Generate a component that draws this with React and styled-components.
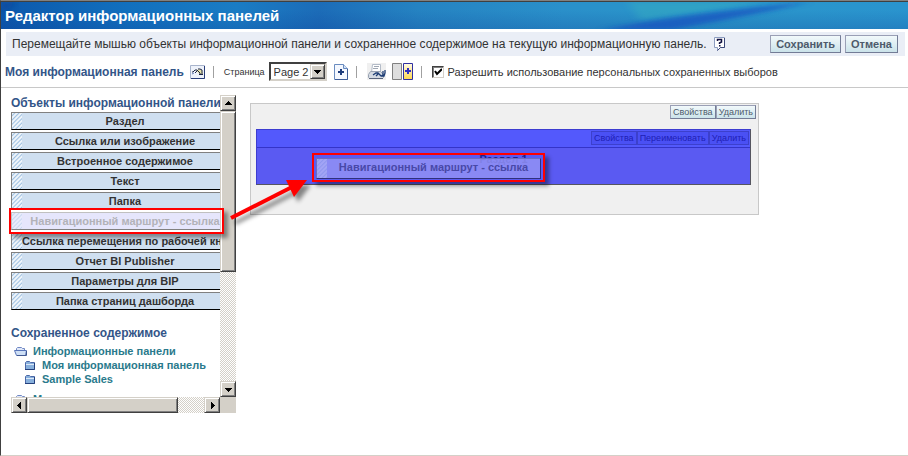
import { useState } from "react";
import styled, { createGlobalStyle, css } from "styled-components";

const GlobalStyle = createGlobalStyle`
  * {
    box-sizing: border-box;
  }

  body {
    margin: 0;
    background: #ffffff;
    color: #333333;
    font-family: "Liberation Sans", Arial, sans-serif;
    font-size: 12px;
  }

  button, select {
    font-family: inherit;
  }
`;

const Page = styled.div`
  display: flex;
  flex-direction: column;
  min-height: 100vh;
  border-top: 1px solid #808080;
  border-left: 1px solid #404040;
  border-bottom: 1px solid #d4d0c8;
`;

const Header = styled.header`
  position: relative;
  display: flex;
  align-items: center;
  height: 28px;
  padding-left: 4px;
  border-top: 1px solid #404040;
  background: linear-gradient(rgba(10, 50, 140, 0) 30%, rgba(10, 50, 140, 0.2)),
    linear-gradient(
      90deg,
      #0c58ac 0%,
      #1270be 14%,
      #1a7cc4 26%,
      #1c6cb8 35%,
      #2583c2 46%,
      #2a90ca 62%,
      #2a96ca 76%,
      #2a94ce 100%
    );
`;

const Swoosh = styled.svg`
  position: absolute;
  inset: 0;
  width: 100%;
  height: 100%;
`;

const Title = styled.h1`
  position: relative;
  margin: 0;
  color: #ffffff;
  font-size: 15px;
  line-height: 18px;
`;

const Hint = styled.div`
  display: flex;
  align-items: center;
  min-height: 24px;
  margin: 3px 3px 0 5px;
  padding: 0 7px 0 6px;
  background: #eaeef6;
`;

const HintText = styled.span`
  font-size: 12px;
  line-height: 16px;
`;

const HelpButton = styled.button`
  display: flex;
  margin-left: 8px;
  padding: 0;
  border: 0;
  background: none;
`;

const HintActions = styled.div`
  display: flex;
  gap: 4px;
  margin-left: auto;
`;

const bevel = css`
  border: 1px solid;
  border-color: #9a9fb5 #737c96 #737c96 #9a9fb5;
  background: linear-gradient(#f2f9fb, #cbe3ea);
  color: #4d5a6b;
`;

const ActionButton = styled.button`
  ${bevel}
  height: 18px;
  padding: 0 5px;
  font-size: 11px;
  font-weight: bold;
  line-height: 16px;
`;

const SmallButton = styled.button`
  ${bevel}
  height: 14px;
  padding: 0 2px;
  font-size: 9px;
  line-height: 12px;
`;

const Toolbar = styled.div`
  display: flex;
  align-items: center;
  height: 32px;
  padding-left: 4px;
  border-bottom: 1px solid #c8c8c8;
`;

const DashboardName = styled.h2`
  margin: 0 6px 0 0;
  color: #335588;
  font-size: 12px;
`;

const IconButton = styled.button`
  display: flex;
  margin: 0;
  padding: 0;
  border: 0;
  background: none;
`;

const PageTools = styled.div`
  display: flex;
  align-items: center;
  gap: 6px;
`;

const Divider = styled.span`
  width: 1px;
  height: 12px;
  margin: 0 10px 0 8px;
  background: #a0a0a0;
`;

const PageLabel = styled.label`
  margin-right: 4px;
  font-size: 9px;
`;

const SelectBox = styled.div`
  position: relative;
  margin-right: 7px;
`;

const PageSelect = styled.select`
  display: block;
  width: 58px;
  height: 19px;
  padding: 0 0 0 3px;
  border: 2px solid;
  border-color: #404040 #d4d0c8 #d4d0c8 #404040;
  border-radius: 0;
  background: #ffffff;
  color: #333333;
  font-size: 11px;
  appearance: none;
`;

const raised = css`
  border: 1px solid;
  border-color: #d4d0c8 #404040 #404040 #d4d0c8;
  background: #d4d0c8;
  box-shadow: inset 1px 1px #ffffff, inset -1px -1px #808080;
`;

const SelectArrow = styled.span`
  ${raised}
  position: absolute;
  top: 2px;
  right: 2px;
  display: flex;
  align-items: center;
  justify-content: center;
  width: 15px;
  height: 15px;
  pointer-events: none;
`;

const CheckLabel = styled.label`
  display: flex;
  align-items: center;
  gap: 4px;
  font-size: 11px;
`;

const CheckWrap = styled.span`
  position: relative;
  display: flex;

  svg {
    position: absolute;
    top: 2px;
    left: 2px;
    pointer-events: none;
  }
`;

const Check = styled.input`
  width: 12px;
  height: 12px;
  margin: 0;
  border: 1px solid;
  border-color: #404040 #d4d0c8 #d4d0c8 #404040;
  box-shadow: inset 1px 1px #808080;
  background: #ffffff;
  appearance: none;
`;

const Workspace = styled.main`
  position: relative;
  display: flex;
  align-items: flex-start;
  gap: 14px;
  padding: 7px 149px 0 10px;
`;

const Sidebar = styled.aside`
  display: grid;
  flex: none;
  grid-template-columns: 209px 16px;
  grid-template-rows: 302px 16px;
`;

const SidebarView = styled.div`
  overflow: hidden;
`;

const SideTitle = styled.h2`
  margin: 0;
  color: #335588;
  font-size: 12px;
  line-height: 17px;
  white-space: nowrap;
`;

const ObjectList = styled.ul`
  display: flex;
  flex-direction: column;
  gap: 2px;
  width: 218px;
  margin: 0 0 15px;
  padding: 0;
  list-style: none;
`;

const Tile = styled.li`
  display: flex;
  height: 18px;
  border: 1px solid;
  border-color: #808080 #000000 #000000 #808080;
  background: #cfdff0;
  font-size: 11px;
  font-weight: bold;
  line-height: 16px;
  white-space: nowrap;

  ${({ $faded }) =>
    $faded &&
    css`
      border-color: #c0c0c0 #808080 #808080 #c0c0c0;
      background: #e6e6fc;
      color: #b2b2b8;
    `}
`;

const Grip = styled.span`
  flex: none;
  width: 10px;
  background: repeating-linear-gradient(
    135deg,
    #eef4fa 0px,
    #eef4fa 1px,
    #9dc0e2 2px,
    #eef4fa 3px
  );
  opacity: ${({ $faded }) => ($faded ? 0.4 : 1)};
`;

const TileText = styled.span`
  flex: 1;
  text-align: center;
`;

const Tree = styled.ul`
  margin: 0;
  padding: 2px 0 0 3px;
  list-style: none;
`;

const Branch = styled.li`
  display: flex;
  align-items: center;
  gap: ${({ $nested }) => ($nested ? 6 : 5)}px;
  height: 14px;
  margin-top: ${({ $spaced }) => ($spaced ? 6 : 0)}px;
  padding-left: ${({ $nested }) => ($nested ? 10 : 0)}px;
  white-space: nowrap;
`;

const BranchLink = styled.a`
  color: #2a7a8c;
  font-size: 11px;
  font-weight: bold;
  text-decoration: none;
`;

const Track = styled.div`
  display: flex;
  flex-direction: ${({ $horizontal }) => ($horizontal ? "row" : "column")};
  background: repeating-conic-gradient(#ffffff 0 25%, #d4d0c8 0 50%) 0 0 / 2px 2px;
`;

const TrackButton = styled.button`
  ${raised}
  display: flex;
  flex: none;
  align-items: center;
  justify-content: center;
  width: 16px;
  height: 16px;
  padding: 0;

  &:last-child {
    margin-top: ${({ $horizontal }) => ($horizontal ? "0" : "auto")};
    margin-left: ${({ $horizontal }) => ($horizontal ? "auto" : "0")};
  }
`;

const Thumb = styled.div`
  ${raised}
  flex: none;
  width: ${({ $horizontal }) => ($horizontal ? "151px" : "16px")};
  height: ${({ $horizontal }) => ($horizontal ? "16px" : "161px")};
`;

const Corner = styled.div`
  background: #d4d0c8;
`;

const Column = styled.section`
  display: flex;
  flex: 1;
  flex-direction: column;
  min-height: 111px;
  margin-top: 8px;
  padding: 1px 2px 29px;
  border: 1px solid #c8c8c8;
  background: #f0f0f0;
`;

const ColumnBar = styled.div`
  display: flex;
  justify-content: flex-end;
`;

const Section = styled.section`
  height: 56px;
  margin: 10px 5px 0 3px;
  border: 1px solid;
  border-color: #3c3cd0 #55555f #55555f #3c3cd0;
  background: #5a5af2;
`;

const SectionBar = styled(ColumnBar)`
  height: 18px;
  padding: 1px 1px 0;
  border-bottom: 1px solid #3434c8;
  background: #5359fc;

  ${SmallButton} {
    border-color: #3c40cc;
    background: #4a50f4;
    color: #2020b4;
  }
`;

const SectionName = styled.h3`
  margin: 4px 0 0;
  color: #20208c;
  font-size: 11px;
  line-height: 14px;
  text-align: center;
`;

const DragGhost = styled.div`
  position: absolute;
  top: 70px;
  left: 315px;
  display: flex;
  width: 225px;
  height: 21px;
  border: 1px solid;
  border-color: #6c6cc0 #30307c #30307c #6c6cc0;
  background: rgba(146, 146, 244, 0.85);
  color: #4848a8;
  font-size: 11px;
  font-weight: bold;
  line-height: 17px;
  white-space: nowrap;

  ${Grip} {
    opacity: 0.25;
  }
`;

const Highlight = styled.div`
  position: absolute;
  border: 2px solid #ff0000;
  box-shadow: 4px 4px 4px rgba(0, 0, 0, 0.4);
  pointer-events: none;
`;

const SourceMark = styled(Highlight)`
  top: 120px;
  left: 8px;
  width: 215px;
  height: 26px;
`;

const TargetMark = styled(Highlight)`
  top: 65px;
  left: 311px;
  width: 233px;
  height: 29px;
`;

const Arrow = styled.svg`
  position: absolute;
  top: 82px;
  left: 219px;
  filter: drop-shadow(4px 5px 2px rgba(0, 0, 0, 0.45));
  pointer-events: none;
`;

const OBJECTS = [
  "Раздел",
  "Ссылка или изображение",
  "Встроенное содержимое",
  "Текст",
  "Папка",
  "Навигационный маршрут - ссылка",
  "Ссылка перемещения по рабочей книге",
  "Отчет BI Publisher",
  "Параметры для BIP",
  "Папка страниц дашборда",
];

const DRAGGED = "Навигационный маршрут - ссылка";

function Triangle({ dir }) {
  const points = {
    up: "0,5 7,5 4,1 3,1",
    down: "0,2 7,2 4,6 3,6",
    left: "5,0 5,7 1,4 1,3",
    right: "2,0 2,7 6,4 6,3",
  };
  return (
    <svg width="7" height="7" shapeRendering="crispEdges">
      <polygon points={points[dir]} fill="#000" />
    </svg>
  );
}

function HelpIcon() {
  return (
    <svg width="12" height="14" viewBox="0 0 12 14">
      <path d="M.5 .5h10v10h-4l-3 3v-3h-3z" fill="#fff" stroke="#8c9cc0" />
      <path d="M10.500 1v9.500h-4l-3 3" fill="none" stroke="#3c4878" />
      <path d="M3.500 4V2.500h4v2.500l-2 1V7" fill="none" stroke="#101040" strokeWidth="1.500" />
      <path d="M5 8h1.500v1.500H5z" fill="#101040" />
    </svg>
  );
}

function PropertiesIcon() {
  return (
    <svg width="15" height="14" viewBox="0 0 15 14">
      <path d="M.5 .5h14v13H.5z" fill="#eef2fa" stroke="#a8b4cc" />
      <path d="M14.500 1v12.500H1" fill="none" stroke="#283c78" />
      <path d="M6 5.500l3-1.500 3 1 1 4-3 .5z" fill="#e8e4a8" />
      <path d="M2 7h1l2-2h2l3 3v1M5 8l2-2M8 4h2l2 1v4M9 9.500h4" fill="none" stroke="#1c2444" />
      <path d="M2 9l2-1" stroke="#6880b8" />
    </svg>
  );
}

function AddPageIcon() {
  return (
    <svg width="14" height="16" viewBox="0 0 14 16">
      <path d="M.5 .5h9l4 4v11H.5z" fill="#f4f8ff" stroke="#6a8cc0" />
      <path d="M9.500 .5v4h4" fill="#d4e2f6" stroke="#6a8cc0" />
      <path d="M13.500 5v10.500H1" fill="none" stroke="#3c5c98" />
      <path d="M4 8h6M7 5v6" stroke="#1c3c7c" strokeWidth="2" />
    </svg>
  );
}

function PrintIcon() {
  return (
    <svg width="19" height="17" viewBox="0 0 19 17">
      <path d="M0 0h19v17H0z" fill="#f0f0f0" />
      <path d="M5.500 1.500h8v8h-9z" fill="#fff" stroke="#b4bcc8" />
      <path d="M7 3.500h5M6 5.500h5" stroke="#a0a8b4" />
      <path d="M1.500 11.500l2-3h10l3 3v3l-1 1h-13l-1-1z" fill="#d4dae2" stroke="#98a2b2" />
      <path d="M2 15.500h14" stroke="#58647c" />
      <path d="M6 12l3-2h2l3 3 2-1V8M9 13l2-2M14 13h3l1-3V7" fill="none" stroke="#1c3c74" strokeWidth="1.300" />
    </svg>
  );
}

function AddColumnIcon() {
  return (
    <svg width="21" height="17" viewBox="0 0 21 17">
      <defs>
        <linearGradient id="gold" x1="0" y1="0" x2="0" y2="1">
          <stop offset="0" stopColor="#fffbe8" />
          <stop offset="1" stopColor="#ffd84c" />
        </linearGradient>
      </defs>
      <path d="M.5 .5h9v16h-9z" fill="#dedede" stroke="#808080" />
      <path d="M11.500 .5h9v16h-9z" fill="url(#gold)" stroke="#3030a0" />
      <path d="M13 8h6M16 5v6" stroke="#3030c0" strokeWidth="2" />
    </svg>
  );
}

function Folder({ open }) {
  if (open)
    return (
      <svg width="14" height="9" viewBox="0 0 14 9">
        <path d="M2.500 4V1.500l1-1h4l1 1h2v3" fill="#e0e8f8" stroke="#7088c4" />
        <path d="M.5 3.500h12l-1 5h-9z" fill="#cfe0f6" stroke="#5874b8" />
        <path d="M12.500 4v4.500H3" fill="none" stroke="#405890" />
      </svg>
    );
  return (
    <svg width="12" height="9" viewBox="0 0 12 9">
      <path d="M1.500 8.500v-7l1-1h3l1 1h4v7z" fill="#88b0dc" stroke="#4c68a8" />
      <path d="M2 3.500h8" stroke="#dce8f8" />
      <path d="M10.500 2v6.500H1" fill="none" stroke="#24407c" />
    </svg>
  );
}

function ScrollBar({ horizontal }) {
  return (
    <Track $horizontal={horizontal}>
      <TrackButton $horizontal={horizontal}>
        <Triangle dir={horizontal ? "left" : "up"} />
      </TrackButton>
      <Thumb $horizontal={horizontal} />
      <TrackButton $horizontal={horizontal}>
        <Triangle dir={horizontal ? "right" : "down"} />
      </TrackButton>
    </Track>
  );
}

function SavedItem({ open, nested, spaced, children }) {
  return (
    <Branch $nested={nested} $spaced={spaced}>
      <Folder open={open} />
      <BranchLink href="#">{children}</BranchLink>
    </Branch>
  );
}

function App() {
  const [page, setPage] = useState("Page 2");
  const [allowSaved, setAllowSaved] = useState(true);

  return (
    <>
      <GlobalStyle />
      <Page>
        <Header>
          <Swoosh viewBox="0 0 908 27" preserveAspectRatio="none">
            <defs>
              <filter id="soft" x="-10%" y="-50%" width="120%" height="200%">
                <feGaussianBlur stdDeviation="5 2" />
              </filter>
            </defs>
            <path d="M628 0h140L640 18z" fill="#38b0c0" opacity="0.45" filter="url(#soft)" />
            <path d="M600 28Q680 12 810 0Q730 18 670 28z" fill="#1450c0" opacity="0.7" filter="url(#soft)" />
            <path d="M0 0h16L0 14z" fill="#083c90" opacity="0.5" filter="url(#soft)" />
          </Swoosh>
          <Title>Редактор информационных панелей</Title>
        </Header>

        <Hint>
          <HintText>
            Перемещайте мышью объекты информационной панели и сохраненное
            содержимое на текущую информационную панель.
          </HintText>
          <HelpButton aria-label="Справка">
            <HelpIcon />
          </HelpButton>
          <HintActions>
            <ActionButton>Сохранить</ActionButton>
            <ActionButton>Отмена</ActionButton>
          </HintActions>
        </Hint>

        <Toolbar>
          <DashboardName>Моя информационная панель</DashboardName>
          <IconButton>
            <PropertiesIcon />
          </IconButton>
          <Divider />
          <PageLabel htmlFor="page">Страница</PageLabel>
          <SelectBox>
            <PageSelect
              id="page"
              value={page}
              onChange={(e) => setPage(e.target.value)}
            >
              <option>Page 1</option>
              <option>Page 2</option>
            </PageSelect>
            <SelectArrow>
              <Triangle dir="down" />
            </SelectArrow>
          </SelectBox>
          <IconButton>
            <AddPageIcon />
          </IconButton>
          <Divider />
          <PageTools>
            <IconButton>
              <PrintIcon />
            </IconButton>
            <IconButton>
              <AddColumnIcon />
            </IconButton>
          </PageTools>
          <Divider />
          <CheckLabel>
            <CheckWrap>
              <Check
                type="checkbox"
                checked={allowSaved}
                onChange={(e) => setAllowSaved(e.target.checked)}
              />
              {allowSaved && (
                <svg width="8" height="8">
                  <path d="M1 3l2 3 5-5" fill="none" stroke="#000" strokeWidth="2" />
                </svg>
              )}
            </CheckWrap>
            Разрешить использование персональных сохраненных выборов
          </CheckLabel>
        </Toolbar>

        <Workspace>
          <Sidebar>
            <SidebarView>
              <SideTitle>Объекты информационной панели</SideTitle>
              <ObjectList>
                {OBJECTS.map((name) => (
                  <Tile key={name} $faded={name === DRAGGED}>
                    <Grip $faded={name === DRAGGED} />
                    <TileText>{name}</TileText>
                  </Tile>
                ))}
              </ObjectList>
              <SideTitle>Сохраненное содержимое</SideTitle>
              <Tree>
                <SavedItem open>Информационные панели</SavedItem>
                <SavedItem nested>Моя информационная панель</SavedItem>
                <SavedItem nested>Sample Sales</SavedItem>
                <SavedItem open spaced>
                  Мои
                </SavedItem>
              </Tree>
            </SidebarView>
            <ScrollBar />
            <ScrollBar horizontal />
            <Corner />
          </Sidebar>

          <Column>
            <ColumnBar>
              <SmallButton>Свойства</SmallButton>
              <SmallButton>Удалить</SmallButton>
            </ColumnBar>
            <Section>
              <SectionBar>
                <SmallButton>Свойства</SmallButton>
                <SmallButton>Переименовать</SmallButton>
                <SmallButton>Удалить</SmallButton>
              </SectionBar>
              <SectionName>Раздел 1</SectionName>
            </Section>
          </Column>

          <DragGhost>
            <Grip />
            <TileText>{DRAGGED}</TileText>
          </DragGhost>
          <SourceMark />
          <TargetMark />
          <Arrow width="100" height="60" viewBox="220 170 100 60">
            <path d="M231 218L292 187" stroke="#ff0000" strokeWidth="4" />
            <path d="M286 180h21l-13 17z" fill="#ff0000" />
          </Arrow>
        </Workspace>
      </Page>
    </>
  );
}

export default App;
